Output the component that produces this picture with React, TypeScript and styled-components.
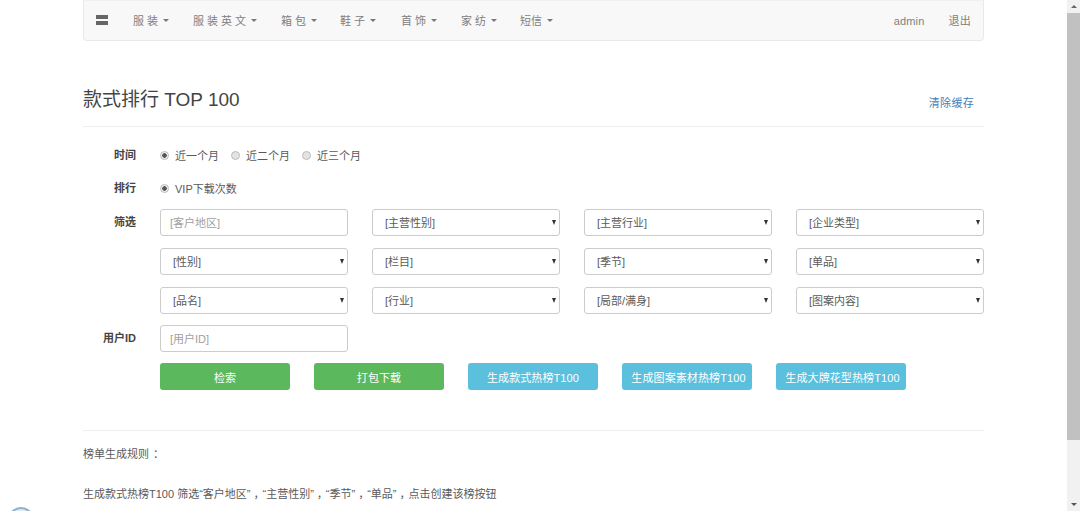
import React from "react";
import styled, { createGlobalStyle } from "styled-components";

const Global = createGlobalStyle`
  html, body { margin: 0; padding: 0; height: 511px; overflow: hidden; background: #fff; }
  body { font-family: "Liberation Sans", "Noto Sans CJK SC", sans-serif; font-size: 11px; color: #555; }
  * { box-sizing: border-box; }
`;
const Viewport = styled.div`display: flex; height: 511px; width: 1080px; overflow: hidden; position: relative;`;
const Page = styled.main`flex: 0 0 1067px; height: 511px; padding: 0 83px; overflow: hidden;`;

const Navbar = styled.nav`
  height: 41px; display: flex; align-items: center; background: #f8f8f8;
  border: 1px solid #e9e9e9; border-top-color: #f1f1f1; border-radius: 0 0 4px 4px; padding: 0 12px 0 12px;
`;
const BrandIcon = styled.svg`width: 12px; height: 10px; flex: none; margin: -1px 25px 0 0; display: block;`;
const NavItem = styled.a<{ $width: number; $spaced?: boolean }>`
  flex: 0 0 ${p => p.$width}px; color: #808080; font-size: 11px; line-height: 14px; white-space: nowrap; display: flex; align-items: center;
  letter-spacing: ${p => (p.$spaced ? "3px" : "0")};
`;
const Caret = styled.span<{ $gap: number }>`
  width: 0; height: 0; margin-left: ${p => p.$gap}px; border-top: 3.5px solid #777;
  border-left: 3px solid transparent; border-right: 3px solid transparent;
`;
const NavRight = styled.div`margin-left: auto; display: flex; align-items: center; gap: 24px; color: #808080; font-size: 11px; line-height: 14px; letter-spacing: 0.2px;`;

const Header = styled.header`
  height: 86px; border-bottom: 1px solid #eee; display: flex; justify-content: space-between; padding: 48px 10px 0 0;
`;
const Title = styled.h1`margin: 0; font-size: 19px; line-height: 22px; font-weight: 400; color: #444;`;
const ClearLink = styled.a`font-size: 11px; line-height: 14px; margin-top: 7px; color: #3f80ba; letter-spacing: 0.3px;`;

const Form = styled.form`
  display: grid; grid-template-columns: 53px 1fr; column-gap: 24px; padding-top: 16px;
`;
const Label = styled.label<{ $height: number; $mb?: number }>`
  font-size: 11px; font-weight: 700; color: #444; text-align: right; white-space: nowrap;
  height: ${p => p.$height}px; line-height: ${p => p.$height}px; margin-bottom: ${p => p.$mb ?? 0}px;
`;
const RadioRow = styled.div<{ $mb: number }>`
  display: flex; align-items: center; height: 24px; margin-bottom: ${p => p.$mb}px; gap: 12px;
`;
const RadioLabel = styled.span`display: flex; align-items: center; gap: 6px; color: #5a5a5a; font-size: 11px;`;
const Radio = styled.input`
  appearance: none; width: 9px; height: 9px; margin: 0; border-radius: 50%; flex: none;
  border: 1px solid #bbb; background: #e3e3e3;
  &:checked { background: radial-gradient(circle, #555 0 2px, #f1f1f1 2.5px); }
`;
const FieldGrid = styled.div`
  display: grid; grid-template-columns: repeat(4, 188px); column-gap: 24px; row-gap: 12px; margin-bottom: 11px;
`;
const TextInput = styled.input`
  height: 27px; width: 188px; border: 1px solid #ccc; border-radius: 3px; padding: 0 9px; font: inherit; font-size: 11px; color: #555; background: #fff;
  &::placeholder { color: #a0a0a0; opacity: 1; }
`;
const SelectWrap = styled.div`
  position: relative; height: 27px;
  &::after {
    content: ""; position: absolute; right: 4px; top: 11px; width: 0; height: 0;
    border-top: 5px solid #333; border-left: 2.5px solid transparent; border-right: 2.5px solid transparent;
  }
`;
const Select = styled.select`
  appearance: none; width: 100%; height: 27px; border: 1px solid #ccc; border-radius: 3px; background: #fff;
  padding: 0 12px; font: inherit; font-size: 11px; color: #5a5a5a;
`;
const UserInputRow = styled.div`height: 27px; margin-bottom: 11px;`;
const Actions = styled.div`display: flex; gap: 24px; grid-column: 2;`;
const Btn = styled.button<{ $kind: "green" | "blue"; $shift?: number }>`
  width: 130px; height: 27px; border: 0; border-radius: 3px; color: #fff; padding: 0 0 0 ${p => p.$shift ?? 0}px; font: inherit; font-size: 11px; letter-spacing: 0.1px;
  background: ${p => (p.$kind === "green" ? "#5cb85c" : "#5bc0de")};
`;
const Divider = styled.hr`border: 0; border-top: 1px solid #eee; margin: 40px 0 0;`;
const Para = styled.p<{ $mt: number }>`margin: ${p => p.$mt}px 0 0; font-size: 11px; line-height: 16px; color: #5a5a5a; white-space: nowrap;`;
const Comma = styled.span`margin: 0 -2px 0 3px;`;
const Colon = styled.span`margin-left: 4px;`;

const Scrollbar = styled.aside`flex: 0 0 13px; height: 511px; background: #f1f1f1; display: flex; flex-direction: column; align-items: center;`;
const ScrollBtn = styled.div`flex: 0 0 13px; display: flex; align-items: center; justify-content: center;`;
const ScrollThumb = styled.div`flex: 0 0 427px; width: 100%; background: #c1c1c1;`;
const ScrollGap = styled.div`flex: 1;`;
const Arrow = styled.span<{ $up?: boolean }>`
  width: 0; height: 0; border-left: 3px solid transparent; border-right: 3px solid transparent;
  ${p => (p.$up ? "border-bottom: 3px solid #666;" : "border-top: 3px solid #555;")}
`;
const Bubble = styled.div`
  position: absolute; left: 8px; top: 507px; width: 26px; height: 26px; border-radius: 50%;
  background: #dfe9f2; border: 2px solid #8fb0c9;
`;

const nav: [string, number, boolean][] = [
  ["服装", 60, true], ["服装英文", 88, true], ["箱包", 59, true], ["鞋子", 61, true],
  ["首饰", 60, true], ["家纺", 59, true], ["短信", 50, false],
];
const rows = [
  ["[主营性别]", "[主营行业]", "[企业类型]"],
  ["[性别]", "[栏目]", "[季节]", "[单品]"],
  ["[品名]", "[行业]", "[局部/满身]", "[图案内容]"],
];

const Sel = ({ text }: { text: string }) => (
  <SelectWrap><Select defaultValue={text}><option>{text}</option></Select></SelectWrap>
);

export default function App() {
  return (
    <Viewport>
      <Global />
      <Page>
        <Navbar>
          <BrandIcon viewBox="0 0 12 10">
            <rect x="0" y="0" width="12" height="4" fill="#666" />
            <rect x="0" y="6" width="12" height="4" fill="#666" />
          </BrandIcon>
          {nav.map(([t, w, s]) => (
            <NavItem key={t} $width={w} $spaced={s}>{t}<Caret $gap={s ? 2 : 5} /></NavItem>
          ))}
          <NavRight><span>admin</span><span>退出</span></NavRight>
        </Navbar>
        <Header>
          <Title>款式排行 TOP 100</Title>
          <ClearLink>清除缓存</ClearLink>
        </Header>
        <Form>
          <Label $height={24} $mb={9}>时间</Label>
          <RadioRow $mb={9}>
            <RadioLabel><Radio type="radio" name="t" defaultChecked />近一个月</RadioLabel>
            <RadioLabel><Radio type="radio" name="t" />近二个月</RadioLabel>
            <RadioLabel><Radio type="radio" name="t" />近三个月</RadioLabel>
          </RadioRow>
          <Label $height={24} $mb={9}>排行</Label>
          <RadioRow $mb={9}>
            <RadioLabel><Radio type="radio" name="r" defaultChecked />VIP下载次数</RadioLabel>
          </RadioRow>
          <Label $height={27}>筛选</Label>
          <FieldGrid>
            <TextInput placeholder="[客户地区]" />
            {rows.flat().map(t => <Sel key={t} text={t} />)}
          </FieldGrid>
          <Label $height={27}>用户ID</Label>
          <UserInputRow><TextInput placeholder="[用户ID]" /></UserInputRow>
          <Actions>
            <Btn type="button" $kind="green">检索</Btn>
            <Btn type="button" $kind="green">打包下载</Btn>
            <Btn type="button" $kind="blue">生成款式热榜T100</Btn>
            <Btn type="button" $kind="blue" $shift={3}>生成图案素材热榜T100</Btn>
            <Btn type="button" $kind="blue" $shift={3}>生成大牌花型热榜T100</Btn>
          </Actions>
        </Form>
        <Divider />
        <Para $mt={15}>榜单生成规则<Colon>：</Colon></Para>
        <Para $mt={24}>生成款式热榜T100 筛选“客户地区”<Comma>，</Comma>“主营性别”<Comma>，</Comma>“季节”<Comma>，</Comma>“单品”<Comma>，</Comma>点击创建该榜按钮</Para>
      </Page>
      <Scrollbar>
        <ScrollBtn><Arrow $up /></ScrollBtn>
        <ScrollThumb />
        <ScrollGap />
        <ScrollBtn><Arrow /></ScrollBtn>
      </Scrollbar>
      <Bubble />
    </Viewport>
  );
}
